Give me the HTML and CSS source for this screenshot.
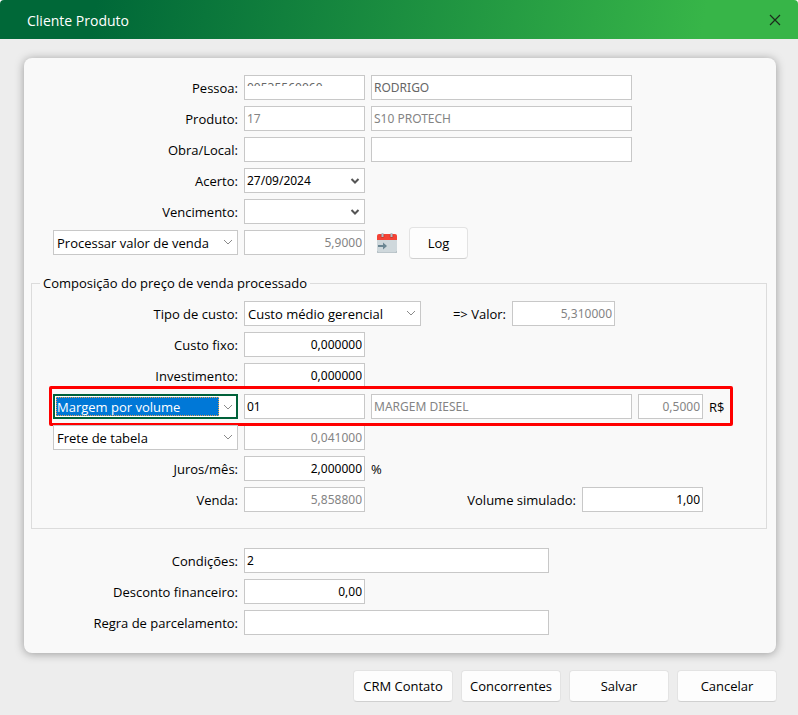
FILE: index.html
```html
<!DOCTYPE html>
<html lang="pt-BR">
<head>
<meta charset="UTF-8">
<title>Cliente Produto</title>
<link rel="stylesheet" href="styles.css">
</head>
<body>
<header class="titlebar">
  <h1>Cliente Produto</h1>
  <button type="button" class="close" aria-label="Fechar">
    <svg width="12" height="12" viewBox="0 0 12 12"><path d="M1 1L11 11M11 1L1 11" fill="none" stroke="#1c2b1c" stroke-width="1.2"/></svg>
  </button>
</header>

<form>
<main class="card">
  <div class="rows">
    <div class="row">
      <label for="pessoa">Pessoa:</label>
      <span class="masked"><input id="pessoa" class="code dim" type="text" value="00535560060" readonly></span>
      <input class="name dim" type="text" value="RODRIGO" aria-label="Nome da pessoa" readonly>
    </div>
    <div class="row">
      <label for="produto">Produto:</label>
      <input id="produto" class="code off" type="text" value="17" readonly>
      <input class="name off" type="text" value="S10 PROTECH" aria-label="Nome do produto" readonly>
    </div>
    <div class="row">
      <label for="obra">Obra/Local:</label>
      <input id="obra" class="code" type="text">
      <input class="name" type="text" aria-label="Nome da obra">
    </div>
    <div class="row">
      <label for="acerto">Acerto:</label>
      <span class="combo date">
        <select id="acerto"><option>27/09/2024</option></select>
        <svg width="10" height="6" viewBox="0 0 10 6"><path d="M1.5 1L5 4.5L8.5 1"/></svg>
      </span>
    </div>
    <div class="row">
      <label for="vencimento">Vencimento:</label>
      <span class="combo date">
        <select id="vencimento"><option></option></select>
        <svg width="10" height="6" viewBox="0 0 10 6"><path d="M1.5 1L5 4.5L8.5 1"/></svg>
      </span>
    </div>
    <div class="row">
      <span class="combo kind">
        <select aria-label="Processamento"><option>Processar valor de venda</option></select>
        <svg width="10" height="6" viewBox="0 0 10 6"><path d="M1 1L5 5L9 1"/></svg>
      </span>
      <input class="code num off" type="text" value="5,9000" aria-label="Valor de venda" readonly>
      <button type="button" class="calendar" aria-label="Agendar">
        <svg width="20" height="20" viewBox="0 0 20 20">
          <path d="M0 6H20V18Q20 20 18 20H2Q0 20 0 18Z" fill="#cfd8dc"/>
          <path d="M0 18Q0 20 2 20H18Q20 20 20 18" fill="none" stroke="#a9b4ba"/>
          <path d="M0 7V3Q0 1 2 1H18Q20 1 20 3V7Z" fill="#f44336"/>
          <circle cx="5.500" cy="3" r="2" fill="#c9372c"/>
          <circle cx="14.500" cy="3" r="2" fill="#c9372c"/>
          <path d="M5.500 0V4M14.500 0V4" stroke="#b0bec5" stroke-width="2"/>
          <path d="M1 13H9" stroke="#6b8693" stroke-width="2"/>
          <path d="M6 9.500L10 13L6 16.500Z" fill="#6b8693"/>
        </svg>
      </button>
      <button type="button" class="log">Log</button>
    </div>
  </div>

  <fieldset>
    <legend>Composição do preço de venda processado</legend>
    <div class="row">
      <label for="tipo">Tipo de custo:</label>
      <span class="combo cost">
        <select id="tipo"><option>Custo médio gerencial</option></select>
        <svg width="10" height="6" viewBox="0 0 10 6"><path d="M1 1L5 5L9 1"/></svg>
      </span>
      <label for="valor" class="lb-valor">=&gt; Valor:</label>
      <input id="valor" class="valor num off" type="text" value="5,310000" readonly>
    </div>
    <div class="row">
      <label for="fixo">Custo fixo:</label>
      <input id="fixo" class="code num" type="text" value="0,000000">
    </div>
    <div class="row">
      <label for="invest">Investimento:</label>
      <input id="invest" class="code num" type="text" value="0,000000">
    </div>
    <div class="row highlight">
      <span class="combo kind active">
        <select aria-label="Tipo de margem"><option>Margem por volume</option></select>
        <svg width="10" height="6" viewBox="0 0 10 6"><path d="M1 1L5 5L9 1"/></svg>
      </span>
      <input class="code" type="text" value="01" aria-label="Código da margem">
      <input class="name off" type="text" value="MARGEM DIESEL" aria-label="Descrição da margem" readonly>
      <input class="margin num off" type="text" value="0,5000" aria-label="Valor da margem" readonly>
      <span>R$</span>
    </div>
    <div class="row">
      <span class="combo kind">
        <select aria-label="Tipo de frete"><option>Frete de tabela</option></select>
        <svg width="10" height="6" viewBox="0 0 10 6"><path d="M1 1L5 5L9 1"/></svg>
      </span>
      <input class="code num off" type="text" value="0,041000" aria-label="Valor do frete" readonly>
    </div>
    <div class="row">
      <label for="juros">Juros/mês:</label>
      <input id="juros" class="code num" type="text" value="2,000000">
      <span>%</span>
    </div>
    <div class="row">
      <label for="venda">Venda:</label>
      <input id="venda" class="code num off" type="text" value="5,858800" readonly>
      <label for="volume" class="lb-volume">Volume simulado:</label>
      <input id="volume" class="code num" type="text" value="1,00">
    </div>
  </fieldset>

  <div class="rows">
    <div class="row">
      <label for="cond">Condições:</label>
      <input id="cond" class="wide" type="text" value="2">
    </div>
    <div class="row">
      <label for="desconto">Desconto financeiro:</label>
      <input id="desconto" class="code num" type="text" value="0,00">
    </div>
    <div class="row">
      <label for="regra">Regra de parcelamento:</label>
      <input id="regra" class="wide" type="text">
    </div>
  </div>
</main>

<footer>
  <button type="button">CRM Contato</button>
  <button type="button">Concorrentes</button>
  <button type="submit">Salvar</button>
  <button type="button">Cancelar</button>
</footer>
</form>
</body>
</html>
```
FILE: styles.css
```css
* {
  box-sizing: border-box;
}
html {
  background: #fff;
}
body {
  margin: 0;
  color: #000;
  font: 13px/18px "Open Sans", "Noto Sans", sans-serif;
}
.titlebar {
  display: flex;
  align-items: center;
  justify-content: space-between;
  height: 39px;
  padding: 0 17px 0 27px;
  border-radius: 4px 4px 0 0;
  background: linear-gradient(100deg, #006838 12%, #37b548 88%);
}
form {
  display: flow-root;
  min-height: calc(100vh - 39px);
  background: #ededed;
}
h1 {
  margin: 0;
  padding-top: 2px;
  color: #fff;
  font-size: 14px;
  font-weight: normal;
}
button {
  font: inherit;
  color: inherit;
}
.close {
  display: flex;
  padding: 0;
  border: 0;
  background: none;
}
.card {
  margin: 19px 22px 0 24px;
  padding: 17px 9px 18px 7px;
  border-radius: 8px;
  background: #f9f9f9;
  box-shadow: 0 1px 10px rgba(0, 0, 0, .35);
}
.rows, fieldset {
  display: flex;
  flex-direction: column;
  gap: 6px;
}
.rows {
  padding-left: 22px;
}
.row {
  display: flex;
  align-items: center;
  gap: 6px;
  height: 25px;
}
label {
  flex: none;
  width: 185px;
  text-align: right;
  white-space: nowrap;
}
fieldset {
  min-width: 0;
  margin: 19px 0;
  padding: 9px 0 16px 21px;
  border: 1px solid #dcdcdc;
}
legend {
  margin-left: -13px;
  padding: 0 3px;
}

/* fields */
input, .combo {
  flex: none;
  height: 25px;
  border: 1px solid #c8c8c8;
  border-radius: 0;
  background: #fff;
  color: #000;
}
input {
  padding: 0 2px;
  font: 12px/18px "Noto Sans", "Open Sans", sans-serif;
}
.num { text-align: right; }
.code, .date { width: 121px; }
.name { width: 261px; }
.wide { width: 305px; }
.kind { width: 185px; }
.cost { width: 177px; }
.valor { width: 103px; }
.margin { width: 65px; }
.dim { color: #666; }
.off { color: #848484; }
.lb-valor { width: 79px; }
.lb-volume { width: 205px; }

.masked {
  position: relative;
  display: flex;
}
.masked::after {
  content: "";
  position: absolute;
  left: 2px;
  right: 2px;
  top: 11px;
  bottom: 2px;
  background: #fff;
}

.combo {
  position: relative;
  display: flex;
}
.combo select {
  flex: 1;
  min-width: 0;
  padding: 0 3px;
  border: 0;
  outline: 0;
  appearance: none;
  background: none;
  color: inherit;
  font: inherit;
}
.combo svg {
  position: absolute;
  right: 4px;
  top: 8px;
  fill: none;
  stroke: #8a8a8a;
  pointer-events: none;
}
.date select {
  padding: 0 2px;
  font: 12px/18px "Noto Sans", "Open Sans", sans-serif;
}
.date svg {
  top: 9px;
  stroke: #555;
  stroke-width: 2;
}
.active {
  padding: 1px 17px 1px 1px;
  border: 2px solid #00613a;
}
.active select {
  padding: 0;
  border: 1px dotted #e8a04c;
  background: #0078d7;
  color: #fff;
}
.active svg {
  right: 3px;
}

.highlight {
  position: relative;
  align-self: flex-start;
}
.highlight::after {
  content: "";
  position: absolute;
  inset: -8px -9px -7px -4px;
  border: 3px solid #f00;
  border-radius: 2px;
  pointer-events: none;
}

/* buttons */
.calendar {
  display: flex;
  margin: 0 6px;
  padding: 0;
  border: 0;
  background: none;
}
.log, footer button {
  height: 32px;
  border: 1px solid #e3e3e3;
  border-bottom-color: #d0d0d0;
  border-radius: 4px;
  background: #fdfdfd;
}
.log {
  width: 59px;
}
footer {
  display: flex;
  justify-content: flex-end;
  gap: 8px;
  padding: 17px 21px 12px;
}
footer button {
  width: 100px;
  padding: 0;
}
```
